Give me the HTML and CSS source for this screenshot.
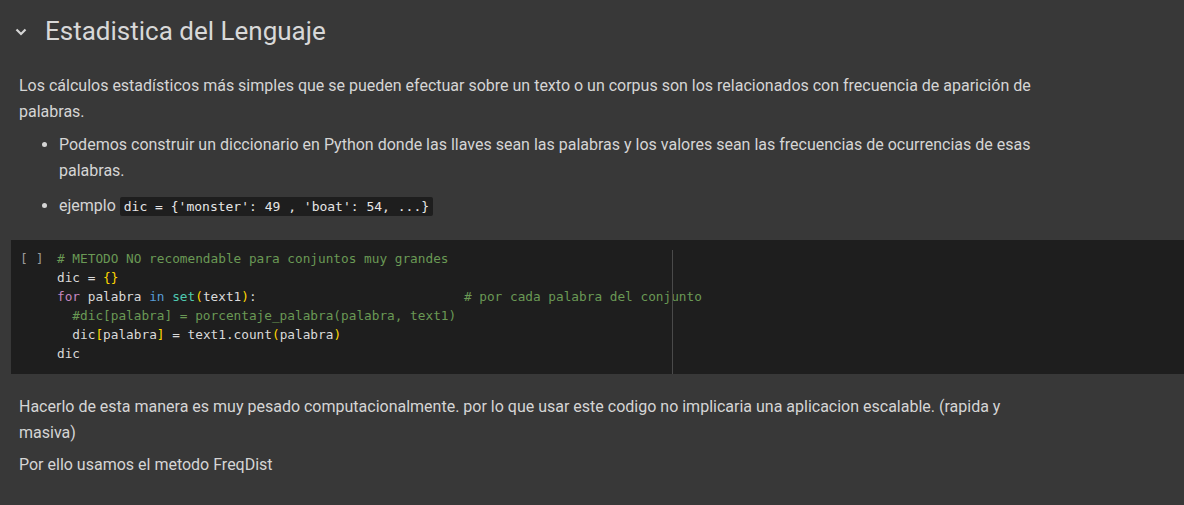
FILE: index.html
```html
<!DOCTYPE html>
<html lang="es">
<head>
<meta charset="utf-8">
<link rel="stylesheet" href="styles.css">
</head>
<body>
<div class="header">
  <svg class="chev" width="14" height="14" viewBox="0 0 14 14"><path d="M2.5 4.5 L7 9 L11.5 4.5" fill="none" stroke="#d4d4d4" stroke-width="2.2"/></svg>
  <h1>Estadistica del Lenguaje</h1>
</div>
<div class="md">
  <p>Los cálculos estadísticos más simples que se pueden efectuar sobre un texto o un corpus son los relacionados con frecuencia de aparición de palabras.</p>
  <ul>
    <li>Podemos construir un diccionario en Python donde las llaves sean las palabras y los valores sean las frecuencias de ocurrencias de esas palabras.</li>
    <li>ejemplo <code>dic = {'monster': 49 , 'boat': 54, ...}</code></li>
  </ul>
</div>
<div class="cell">
  <div class="run">[ ]</div>
  <div class="editor">
    <div class="ruler"></div>
<pre><span class="c"># METODO NO recomendable para conjuntos muy grandes</span>
dic = <span class="b">{}</span>
<span class="k">for</span> palabra <span class="kb">in</span> <span class="f">set</span><span class="b">(</span>text1<span class="b">)</span>:                           <span class="c"># por cada palabra del conjunto</span>
  <span class="c">#dic[palabra] = porcentaje_palabra(palabra, text1)</span>
  dic<span class="b">[</span>palabra<span class="b">]</span> = text1.count<span class="b">(</span>palabra<span class="b">)</span>
dic</pre>
  </div>
</div>
<div class="md after">
  <p>Hacerlo de esta manera es muy pesado computacionalmente. por lo que usar este codigo no implicaria una aplicacion escalable. (rapida y masiva)</p>
  <p>Por ello usamos el metodo FreqDist</p>
</div>
</body>
</html>
```
FILE: styles.css
```css
html, body {
  margin: 0;
  padding: 0;
  background: #383838;
  height: 100%;
  overflow: hidden;
}
body {
  font-family: Roboto, "Noto Sans", sans-serif;
  color: #d5d5d5;
}
.header {
  display: flex;
  align-items: center;
  height: 62px;
  padding-left: 14px;
}
.chev {
  display: block;
  margin-right: 17px;
  margin-top: 2px;
}
h1 {
  margin: 0;
  font-weight: 400;
  font-size: 26px;
  color: #d8d8d8;
  line-height: 62px;
}
.md {
  padding-left: 19px;
  width: 1022px;
  font-size: 16px;
  line-height: 26px;
}
.md p {
  margin: 11px 0 0 0;
}
.md ul {
  margin: 7px 0 0 0;
  padding-left: 40px;
}
.md li {
  margin-bottom: 9px;
}
.md li:last-child {
  margin-bottom: 0;
}
code {
  font-family: "DejaVu Sans Mono", monospace;
  font-size: 13px;
  background: #1e1e1e;
  color: #e6e6e6;
  padding: 2px 4px;
  border-radius: 2px;
}
.cell {
  display: flex;
  margin: 20px 0 0 11px;
  background: #1e1e1e;
  height: 134px;
}
.run {
  font-family: "DejaVu Sans Mono", monospace;
  font-size: 13px;
  color: #9a9a9a;
  width: 46px;
  padding: 9px 0 0 9px;
  line-height: 19px;
  box-sizing: border-box;
}
.editor {
  position: relative;
  flex: 1;
  padding-top: 9px;
}
.ruler {
  position: absolute;
  left: 615px;
  top: 10px;
  bottom: 0;
  width: 1px;
  background: #4a4a4a;
}
pre {
  margin: 0;
  font-family: "DejaVu Sans Mono", monospace;
  font-size: 12.75px;
  line-height: 19px;
  color: #dadada;
}
.c { color: #6a9955; }
.k { color: #c586c0; }
.kb { color: #569cd6; }
.f { color: #4ec9b0; }
.b { color: #ffd700; }
.after {
  margin-top: 20px;
}
.after p {
  margin: 0;
}
.after p + p {
  margin-top: 6px;
}
```
